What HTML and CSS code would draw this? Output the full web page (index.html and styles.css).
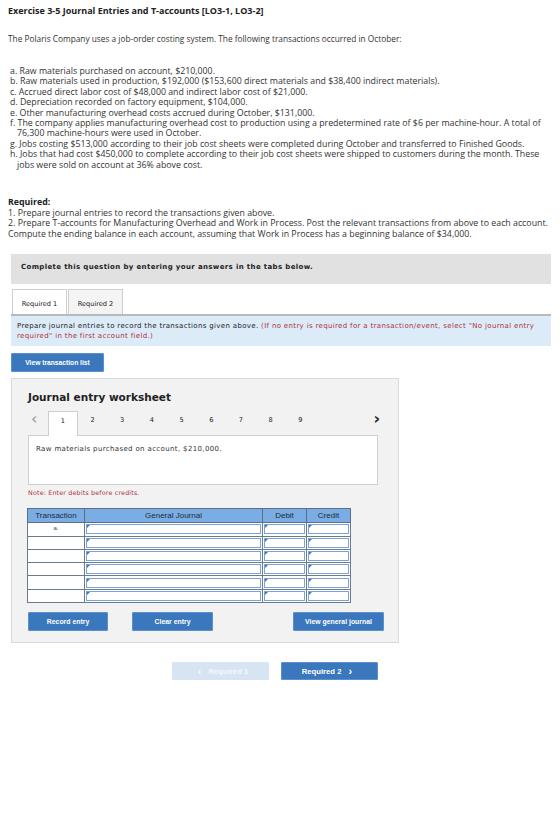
FILE: index.html
```html
<!DOCTYPE html>
<html lang="en">
<head>
<meta charset="utf-8">
<title>Exercise 3-5 Journal Entries and T-accounts</title>
<link rel="stylesheet" href="styles.css">
</head>
<body>
<h1 class="title">Exercise 3-5 Journal Entries and T-accounts [LO3-1, LO3-2]</h1>

<p class="intro">The Polaris Company uses a job-order costing system. The following transactions occurred in October:</p>

<div class="txn-list">
  <div class="txn">a. Raw materials purchased on account, $210,000.</div>
  <div class="txn">b. Raw materials used in production, $192,000 ($153,600 direct materials and $38,400 indirect materials).</div>
  <div class="txn">c. Accrued direct labor cost of $48,000 and indirect labor cost of $21,000.</div>
  <div class="txn">d. Depreciation recorded on factory equipment, $104,000.</div>
  <div class="txn">e. Other manufacturing overhead costs accrued during October, $131,000.</div>
  <div class="txn">f. The company applies manufacturing overhead cost to production using a predetermined rate of $6 per machine-hour. A total of 76,300 machine-hours were used in October.</div>
  <div class="txn">g. Jobs costing $513,000 according to their job cost sheets were completed during October and transferred to Finished Goods.</div>
  <div class="txn">h. Jobs that had cost $450,000 to complete according to their job cost sheets were shipped to customers during the month. These jobs were sold on account at 36% above cost.</div>
</div>

<div class="required">
  <div class="req-head">Required:</div>
  <div>1. Prepare journal entries to record the transactions given above.</div>
  <div>2. Prepare T-accounts for Manufacturing Overhead and Work in Process. Post the relevant transactions from above to each account. Compute the ending balance in each account, assuming that Work in Process has a beginning balance of $34,000.</div>
</div>

<div class="banner">Complete this question by entering your answers in the tabs below.</div>

<div class="tabs">
  <div class="tab active">Required 1</div>
  <div class="tab">Required 2</div>
</div>

<div class="instr">Prepare journal entries to record the transactions given above. <span class="hint">(If no entry is required for a transaction/event, select "No journal entry required" in the first account field.)</span></div>

<button class="btn btn-list">View transaction list</button>

<section class="sheet">
  <h2 class="sheet-title">Journal entry worksheet</h2>
  <div class="pager">
    <span class="arrow prev">&lsaquo;</span>
    <span class="page current">1</span>
    <span class="page">2</span>
    <span class="page">3</span>
    <span class="page">4</span>
    <span class="page">5</span>
    <span class="page">6</span>
    <span class="page">7</span>
    <span class="page">8</span>
    <span class="page">9</span>
    <span class="arrow next">&rsaquo;</span>
  </div>
  <div class="desc">Raw materials purchased on account, $210,000.</div>
  <div class="note">Note: Enter debits before credits.</div>

  <table class="journal">
    <thead>
      <tr><th class="c-txn">Transaction</th><th class="c-acct">General Journal</th><th class="c-amt">Debit</th><th class="c-amt">Credit</th></tr>
    </thead>
    <tbody>
      <tr><td class="txn-cell">a.</td><td class="in"><div class="field"></div></td><td class="in"><div class="field"></div></td><td class="in"><div class="field"></div></td></tr>
      <tr><td class="txn-cell"></td><td class="in"><div class="field"></div></td><td class="in"><div class="field"></div></td><td class="in"><div class="field"></div></td></tr>
      <tr><td class="txn-cell"></td><td class="in"><div class="field"></div></td><td class="in"><div class="field"></div></td><td class="in"><div class="field"></div></td></tr>
      <tr><td class="txn-cell"></td><td class="in"><div class="field"></div></td><td class="in"><div class="field"></div></td><td class="in"><div class="field"></div></td></tr>
      <tr><td class="txn-cell"></td><td class="in"><div class="field"></div></td><td class="in"><div class="field"></div></td><td class="in"><div class="field"></div></td></tr>
      <tr><td class="txn-cell"></td><td class="in"><div class="field"></div></td><td class="in"><div class="field"></div></td><td class="in"><div class="field"></div></td></tr>
    </tbody>
  </table>

  <div class="sheet-actions">
    <button class="btn btn-record">Record entry</button>
    <button class="btn btn-clear">Clear entry</button>
    <button class="btn btn-view">View general journal</button>
  </div>
</section>

<nav class="req-nav">
  <button class="btn nav-btn disabled"><span class="chev">&lsaquo;</span> Required 1</button>
  <button class="btn nav-btn">Required 2 <span class="chev">&rsaquo;</span></button>
</nav>
</body>
</html>
```

FILE: styles.css
```css
* { box-sizing: border-box; }

body {
  margin: 0;
  padding: 4px 8px 0 8px;
  background: #fff;
  color: #333;
  font-family: "Open Sans", "Liberation Sans", sans-serif;
  font-size: 8.8px;
  line-height: 10.4px;
}

.title {
  margin: 0;
  font-family: "Open Sans", "Liberation Sans", sans-serif;
  font-size: 9px;
  line-height: 14px;
  font-weight: 700;
  color: #222;
}

.intro {
  margin: 16px 0 0 0;
  font-size: 8.3px;
}

.txn-list {
  margin-top: 21.5px;
  padding-left: 2px;
}

.txn {
  padding-left: 7px;
  text-indent: -7px;
}

.required {
  margin-top: 27.5px;
}

.req-head {
  font-weight: 700;
  color: #222;
}

/* grey banner above the answer tabs */
.banner {
  margin: 14.8px 0 0 3px;
  width: 540px;
  height: 30px;
  padding: 8px 0 0 10px;
  background: #e1e1e1;
  font-family: "DejaVu Sans", Verdana, sans-serif;
  font-weight: 700;
  font-size: 7px;
  letter-spacing: 0.36px;
  color: #222;
}

.tabs {
  display: flex;
  margin: 5px 0 0 3px;
  width: 540px;
  padding-left: 1px;
  gap: 1px;
  border-bottom: 2px solid #b9b9b9;
}

.tab {
  width: 55px;
  height: 25px;
  padding-top: 9px;
  text-align: center;
  font-family: "DejaVu Sans", Verdana, sans-serif;
  font-size: 6.6px;
  color: #222;
  background: #f4f4f4;
  border: 1px solid #cfcfcf;
  border-bottom: none;
}

.tab.active {
  background: #fff;
}

.instr {
  margin-left: 3px;
  width: 540px;
  height: 30px;
  padding: 5px 6px 0 6px;
  background: #dcebf8;
  font-family: "DejaVu Sans", Verdana, sans-serif;
  font-size: 7px;
  letter-spacing: 0.34px;
  line-height: 10px;
  color: #222;
}

.hint {
  color: #b2303e;
}

.btn {
  display: block;
  border: 1px solid #5b8fcf;
  border-radius: 1px;
  background: #3a77bc;
  color: #fff;
  font-family: "Liberation Sans", Arial, sans-serif;
  font-weight: 700;
  font-size: 6.9px;
  padding: 0;
  cursor: pointer;
}

.btn-list {
  margin: 7px 0 0 3px;
  width: 93px;
  height: 19px;
  font-size: 6.7px;
}

/* worksheet panel */
.sheet {
  margin: 6px 0 0 3px;
  width: 388px;
  height: 265px;
  background: #f2f2f2;
  border: 1px solid #dadada;
  padding: 0 0 0 16px;
}

.sheet-title {
  margin: 11px 0 0 0;
  font-family: "DejaVu Sans", Verdana, sans-serif;
  font-size: 10.5px;
  line-height: 14px;
  font-weight: 700;
  color: #222;
}

.pager {
  display: flex;
  align-items: stretch;
  margin-top: 7px;
  width: 352px;
  height: 24px;
  font-family: "DejaVu Sans", Verdana, sans-serif;
  font-size: 6.6px;
  color: #222;
}

.arrow {
  font-size: 16px;
  line-height: 15px;
  color: #999;
}

.arrow.prev {
  width: 20px;
  padding-left: 3px;
}

.arrow.next {
  margin-left: auto;
  color: #222;
  font-weight: 700;
}

.page {
  width: 29.7px;
  text-align: center;
  padding-top: 4px;
}

.page.current {
  background: #fff;
  border: 1px solid #cfcfcf;
  border-bottom: none;
  position: relative;
  z-index: 1;
  height: 25px;
}

.desc {
  width: 350px;
  height: 50px;
  margin-top: 0;
  padding: 8px 0 0 7px;
  background: #fff;
  border: 1px solid #cfcfcf;
  font-family: "DejaVu Sans", Verdana, sans-serif;
  font-size: 7px;
  letter-spacing: 0.36px;
  color: #333;
}

.note {
  margin-top: 3px;
  font-family: "DejaVu Sans", Verdana, sans-serif;
  font-size: 6.3px;
  letter-spacing: 0.2px;
  color: #b2303e;
}

.journal {
  margin: 10px 0 0 -1px;
  border-collapse: collapse;
  border: 1px solid #5d6e86;
  font-family: "Liberation Sans", Arial, sans-serif;
  font-size: 8px;
}

.journal th {
  height: 14px;
  padding: 0;
  background: #79ade3;
  color: #1f2b3d;
  font-weight: 400;
  border: 1px solid #5d6e86;
  text-align: center;
}

.c-txn { width: 57px; }
.c-acct { width: 178px; }
.c-amt { width: 44px; }

.journal tbody tr {
  height: 13.3px;
}

.journal td {
  padding: 0;
  border: 1px solid #6b7a8f;
  background: #fff;
}

.txn-cell {
  text-align: center;
  font-size: 6px;
  color: #444;
  line-height: 10px;
  vertical-align: top;
}

.journal td.in {
  padding: 1px;
  background: #fff;
}

.field {
  position: relative;
  height: 10px;
  border: 1px solid #7aa3d6;
  background: #fff;
}

/* small marker in the top-left corner of each entry field */
.field::before {
  content: "";
  position: absolute;
  left: 0;
  top: 0;
  border-top: 2px solid #3a77bc;
  border-right: 2px solid transparent;
  border-left: 1px solid #3a77bc;
  border-bottom: 1px solid transparent;
}

.sheet-actions {
  display: flex;
  margin-top: 9px;
  width: 356px;
}

.sheet-actions .btn {
  height: 19px;
}

.btn-record { width: 80px; }
.btn-clear { width: 81px; margin-left: 24px; }
.btn-view { width: 91px; margin-left: auto; }

.req-nav {
  display: flex;
  justify-content: flex-end;
  gap: 12px;
  width: 370px;
  margin-top: 19px;
}

.nav-btn {
  width: 97px;
  height: 18px;
  font-size: 7.7px;
}

.nav-btn.disabled {
  background: #d7e4f2;
  border-color: #d7e4f2;
  color: #f4f8fc;
}

.chev {
  font-size: 11px;
  padding: 0 5px;
  vertical-align: -1px;
}
```
